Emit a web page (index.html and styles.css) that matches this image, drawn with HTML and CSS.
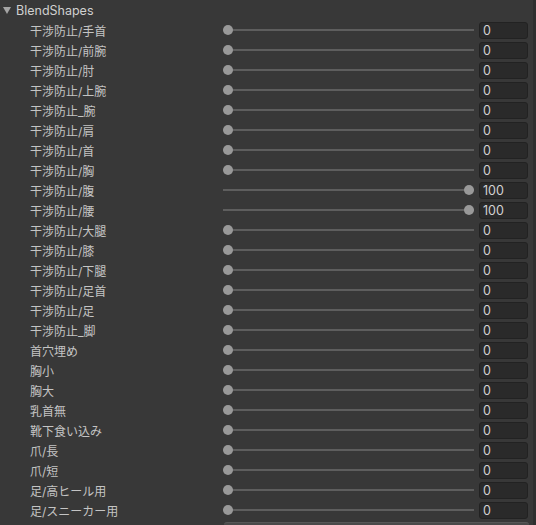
FILE: index.html
```html
<!DOCTYPE html>
<html lang="ja">
<head>
<meta charset="utf-8">
<title>BlendShapes</title>
<link rel="stylesheet" href="styles.css">
</head>
<body>
<div class="panel">
  <div class="header"><span class="tri"></span><span class="title">BlendShapes</span></div>
  <div class="rows">
    <div class="row"><div class="label">干涉防止/手首</div><div class="slider"><div class="knob" style="left:0px"></div></div><div class="field">0</div></div>
    <div class="row"><div class="label">干涉防止/前腕</div><div class="slider"><div class="knob" style="left:0px"></div></div><div class="field">0</div></div>
    <div class="row"><div class="label">干涉防止/肘</div><div class="slider"><div class="knob" style="left:0px"></div></div><div class="field">0</div></div>
    <div class="row"><div class="label">干涉防止/上腕</div><div class="slider"><div class="knob" style="left:0px"></div></div><div class="field">0</div></div>
    <div class="row"><div class="label">干涉防止_腕</div><div class="slider"><div class="knob" style="left:0px"></div></div><div class="field">0</div></div>
    <div class="row"><div class="label">干涉防止/肩</div><div class="slider"><div class="knob" style="left:0px"></div></div><div class="field">0</div></div>
    <div class="row"><div class="label">干涉防止/首</div><div class="slider"><div class="knob" style="left:0px"></div></div><div class="field">0</div></div>
    <div class="row"><div class="label">干涉防止/胸</div><div class="slider"><div class="knob" style="left:0px"></div></div><div class="field">0</div></div>
    <div class="row"><div class="label">干涉防止/腹</div><div class="slider"><div class="knob" style="left:241px"></div></div><div class="field">100</div></div>
    <div class="row"><div class="label">干涉防止/腰</div><div class="slider"><div class="knob" style="left:241px"></div></div><div class="field">100</div></div>
    <div class="row"><div class="label">干涉防止/大腿</div><div class="slider"><div class="knob" style="left:0px"></div></div><div class="field">0</div></div>
    <div class="row"><div class="label">干涉防止/膝</div><div class="slider"><div class="knob" style="left:0px"></div></div><div class="field">0</div></div>
    <div class="row"><div class="label">干涉防止/下腿</div><div class="slider"><div class="knob" style="left:0px"></div></div><div class="field">0</div></div>
    <div class="row"><div class="label">干涉防止/足首</div><div class="slider"><div class="knob" style="left:0px"></div></div><div class="field">0</div></div>
    <div class="row"><div class="label">干涉防止/足</div><div class="slider"><div class="knob" style="left:0px"></div></div><div class="field">0</div></div>
    <div class="row"><div class="label">干涉防止_脚</div><div class="slider"><div class="knob" style="left:0px"></div></div><div class="field">0</div></div>
    <div class="row"><div class="label">首穴埋め</div><div class="slider"><div class="knob" style="left:0px"></div></div><div class="field">0</div></div>
    <div class="row"><div class="label">胸小</div><div class="slider"><div class="knob" style="left:0px"></div></div><div class="field">0</div></div>
    <div class="row"><div class="label">胸大</div><div class="slider"><div class="knob" style="left:0px"></div></div><div class="field">0</div></div>
    <div class="row"><div class="label">乳首無</div><div class="slider"><div class="knob" style="left:0px"></div></div><div class="field">0</div></div>
    <div class="row"><div class="label">靴下食い込み</div><div class="slider"><div class="knob" style="left:0px"></div></div><div class="field">0</div></div>
    <div class="row"><div class="label">爪/長</div><div class="slider"><div class="knob" style="left:0px"></div></div><div class="field">0</div></div>
    <div class="row"><div class="label">爪/短</div><div class="slider"><div class="knob" style="left:0px"></div></div><div class="field">0</div></div>
    <div class="row"><div class="label">足/高ヒール用</div><div class="slider"><div class="knob" style="left:0px"></div></div><div class="field">0</div></div>
    <div class="row"><div class="label">足/スニーカー用</div><div class="slider"><div class="knob" style="left:0px"></div></div><div class="field">0</div></div>
    <div class="row last"><div class="label"></div><div class="bigfield"></div></div>
  </div>
</div>
</body>
</html>
```
FILE: styles.css
```css
html, body {
  margin: 0;
  padding: 0;
  background: #383838;
  height: 100%;
  overflow: hidden;
}
.panel {
  width: 533px;
  height: 525px;
  border-right: 3px solid #2f2f2f;
  font-family: "Inter", "Noto Sans CJK JP", sans-serif;
  font-size: 12px;
  color: #c4c4c4;
  overflow: hidden;
}
.header {
  height: 20px;
  display: flex;
  align-items: center;
}
.tri {
  width: 0;
  height: 0;
  margin-left: 3px;
  margin-right: 5px;
  border-left: 4px solid transparent;
  border-right: 4px solid transparent;
  border-top: 7px solid #a5a5a5;
  margin-top: 1px;
}
.title {
  color: #d0d0d0;
  font-size: 12.5px;
}
.rows {
  display: flex;
  flex-direction: column;
}
.row {
  display: flex;
  align-items: center;
  height: 20px;
}
.label {
  width: 223px;
  padding-left: 30px;
  box-sizing: border-box;
  white-space: nowrap;
  flex: none;
}
.slider {
  position: relative;
  width: 251px;
  height: 10px;
  flex: none;
  background: linear-gradient(#383838 0, #383838 4px, #5e5e5e 4px, #5e5e5e 6px, #383838 6px);
}
.knob {
  position: absolute;
  top: 0;
  width: 10px;
  height: 10px;
  border-radius: 50%;
  background: #999999;
}
.field {
  margin-left: 5px;
  width: 49px;
  height: 17px;
  box-sizing: border-box;
  background: #2a2a2a;
  border: 1px solid #222222;
  border-radius: 3px;
  padding-left: 3px;
  line-height: 15px;
  font-size: 12.5px;
  color: #d2d2d2;
  flex: none;
  margin-top: 1px;
}
.row.last {
  align-items: flex-start;
}
.bigfield {
  margin-top: 2px;
  width: 305px;
  height: 18px;
  margin-left: 1px;
  box-sizing: border-box;
  background: #4a4a4a;
  border-top: 1px solid #575757;
  border-radius: 3px 3px 0 0;
}
```
